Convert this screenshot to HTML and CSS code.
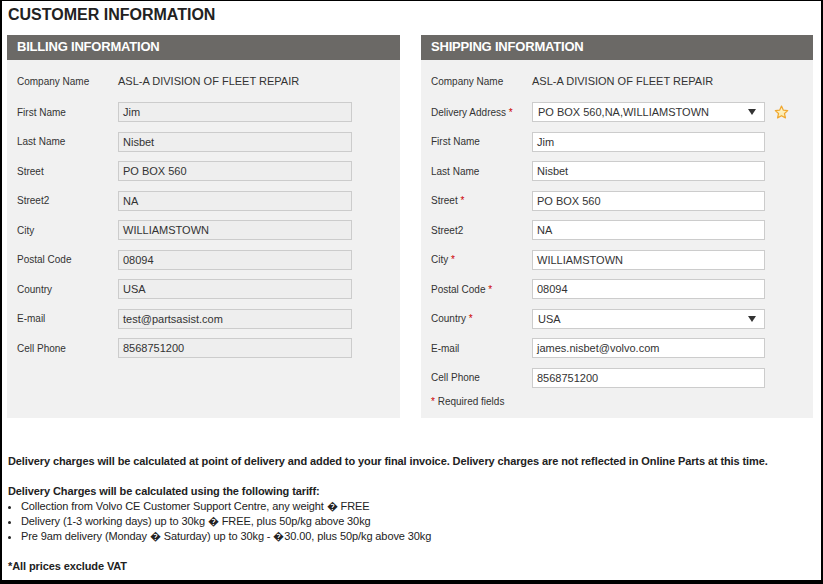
FILE: index.html
```html
<!DOCTYPE html>
<html>
<head>
<meta charset="utf-8">
<link rel="stylesheet" href="styles.css">
</head>
<body>
<div class="frame">
  <h1 class="title">CUSTOMER INFORMATION</h1>
  <div class="panels">
    <section class="panel">
      <div class="panel-head">BILLING INFORMATION</div>
      <div class="panel-body">
        <div class="row company"><span class="label">Company Name</span><span class="value">ASL-A DIVISION OF FLEET REPAIR</span></div>
        <div class="row"><span class="label">First Name</span><span class="field disabled">Jim</span></div>
        <div class="row"><span class="label">Last Name</span><span class="field disabled">Nisbet</span></div>
        <div class="row"><span class="label">Street</span><span class="field disabled">PO BOX 560</span></div>
        <div class="row"><span class="label">Street2</span><span class="field disabled">NA</span></div>
        <div class="row"><span class="label">City</span><span class="field disabled">WILLIAMSTOWN</span></div>
        <div class="row"><span class="label">Postal Code</span><span class="field disabled">08094</span></div>
        <div class="row"><span class="label">Country</span><span class="field disabled">USA</span></div>
        <div class="row"><span class="label">E-mail</span><span class="field disabled">test@partsasist.com</span></div>
        <div class="row"><span class="label">Cell Phone</span><span class="field disabled">8568751200</span></div>
      </div>
    </section>
    <section class="panel">
      <div class="panel-head">SHIPPING INFORMATION</div>
      <div class="panel-body ship">
        <div class="row company"><span class="label">Company Name</span><span class="value">ASL-A DIVISION OF FLEET REPAIR</span></div>
        <div class="row"><span class="label">Delivery Address <i class="req">*</i></span><span class="field select">PO BOX 560,NA,WILLIAMSTOWN<svg class="arrow" width="8" height="6" viewBox="0 0 8 6"><path d="M0 0H8L4 6Z" fill="#333"/></svg></span>
          <svg class="star" width="15" height="15" viewBox="0 0 16 16"><defs><linearGradient id="g" x1="0" y1="0" x2="0" y2="1"><stop offset="0" stop-color="#fff8d8"/><stop offset="1" stop-color="#fbe7a0"/></linearGradient></defs><path d="M8 1.2l2 4.3 4.6.5-3.4 3.1 1 4.6L8 11.4 3.8 13.7l1-4.6L1.4 6l4.6-.5z" fill="url(#g)" stroke="#f0a830" stroke-width="1.3" stroke-linejoin="round"/></svg>
        </div>
        <div class="row"><span class="label">First Name</span><span class="field">Jim</span></div>
        <div class="row"><span class="label">Last Name</span><span class="field">Nisbet</span></div>
        <div class="row"><span class="label">Street <i class="req">*</i></span><span class="field">PO BOX 560</span></div>
        <div class="row"><span class="label">Street2</span><span class="field">NA</span></div>
        <div class="row"><span class="label">City <i class="req">*</i></span><span class="field">WILLIAMSTOWN</span></div>
        <div class="row"><span class="label">Postal Code <i class="req">*</i></span><span class="field">08094</span></div>
        <div class="row"><span class="label">Country <i class="req">*</i></span><span class="field select">USA<svg class="arrow" width="8" height="6" viewBox="0 0 8 6"><path d="M0 0H8L4 6Z" fill="#333"/></svg></span></div>
        <div class="row"><span class="label">E-mail</span><span class="field">james.nisbet@volvo.com</span></div>
        <div class="row"><span class="label">Cell Phone</span><span class="field">8568751200</span></div>
        <div class="required"><i class="req">*</i> Required fields</div>
      </div>
    </section>
  </div>
  <div class="notes">
    <p class="strong">Delivery charges will be calculated at point of delivery and added to your final invoice. Delivery charges are not reflected in Online Parts at this time.</p>
    <p class="strong tariff">Delivery Charges will be calculated using the following tariff:</p>
    <ul class="list">
      <li>Collection from Volvo CE Customer Support Centre, any weight &#xFFFD; FREE</li>
      <li>Delivery (1-3 working days) up to 30kg &#xFFFD; FREE, plus 50p/kg above 30kg</li>
      <li>Pre 9am delivery (Monday &#xFFFD; Saturday) up to 30kg - &#xFFFD;30.00, plus 50p/kg above 30kg</li>
    </ul>
    <p class="strong">*All prices exclude VAT</p>
  </div>
</div>
</body>
</html>
```
FILE: styles.css
```css
html, body {
  margin: 0;
  padding: 0;
  background: #fff;
}
body {
  font-family: "Liberation Sans", Arial, sans-serif;
  color: #222;
}
.frame {
  box-sizing: border-box;
  width: 823px;
  height: 584px;
  border-style: solid;
  border-color: #000;
  border-width: 1px 2px 4px 2px;
  padding: 0 0 0 5px;
}
.title {
  margin: 0;
  padding: 5px 0 0 1px;
  font-size: 16px;
  line-height: 18px;
  font-weight: bold;
  color: #222;
  height: 34px;
  box-sizing: border-box;
}
.panels {
  display: flex;
  gap: 21px;
  width: 806px;
}
.panel {
  width: 393px;
  display: flex;
  flex-direction: column;
}
.panel + .panel {
  width: 392px;
}
.panel-head {
  height: 25px;
  box-sizing: border-box;
  background: #6b6966;
  color: #fff;
  font-weight: bold;
  font-size: 13px;
  letter-spacing: -0.2px;
  line-height: 23px;
  padding-left: 10px;
}
.panel-body {
  flex: none;
  background: #f1f1f1;
  padding: 11px 0 0 10px;
  height: 358px;
  box-sizing: border-box;
}
.row {
  display: flex;
  align-items: center;
  height: 20px;
  margin-bottom: 9.5px;
}
.row.company {
  margin-bottom: 11px;
}
.label {
  width: 101px;
  flex: none;
  font-size: 10px;
  color: #333;
}
.value {
  font-size: 11px;
  color: #333;
}
.field {
  box-sizing: border-box;
  width: 234px;
  height: 20px;
  border: 1px solid #ccc;
  background: #fff;
  font-size: 11px;
  line-height: 18px;
  color: #333;
  padding-left: 4px;
  display: flex;
  align-items: center;
}
.field.disabled {
  background: #eeeeee;
}
.ship .field {
  width: 233px;
}
.select {
  justify-content: space-between;
  padding-right: 8px;
  padding-left: 5px;
}
.arrow {
  flex: none;
}
.star {
  margin-left: 9px;
}
.req {
  font-style: normal;
  color: #c00;
  font-size: 10px;
}
.required {
  font-size: 10px;
  color: #333;
  margin-top: -1px;
}
.notes {
  padding: 36px 0 0 1px;
  font-size: 11px;
  line-height: 15px;
  letter-spacing: -0.1px;
  color: #222;
}
.notes p {
  margin: 0;
}
.strong {
  font-weight: bold;
}
.tariff {
  margin-top: 15px !important;
}
.list {
  margin: 0 0 15px 0;
  padding: 0 0 0 13px;
}
```
